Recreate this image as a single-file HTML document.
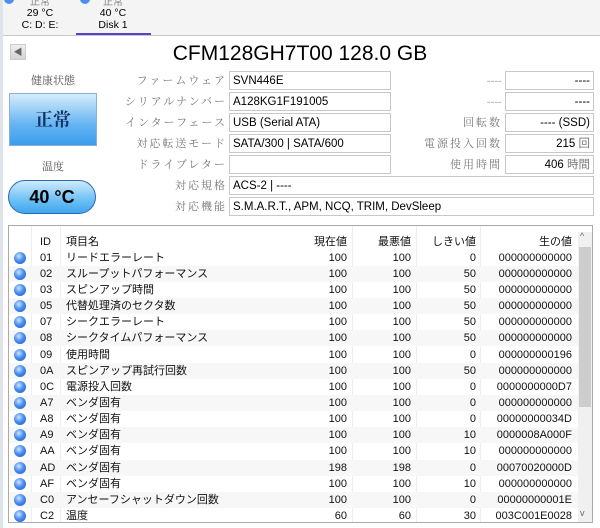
<!DOCTYPE html>
<html><head><meta charset="utf-8"><style>
body{margin:0;width:600px;height:528px;background:#fff;font-family:"Liberation Sans","Noto Sans CJK JP",sans-serif;position:relative;overflow:hidden;font-size:12px;color:#000}
.a{position:absolute}
.box{position:absolute;border:1px solid #c8c8c8;background:#fff;line-height:18px;font-size:11.5px;padding:0 3px;box-sizing:border-box;height:19px}
.lbl{position:absolute;text-align:right;color:#777;font-family:"Noto Serif CJK SC","Liberation Serif",serif;font-size:11px;letter-spacing:2px;line-height:19px}
.row{position:absolute;left:9px;width:569px;height:16px;line-height:16px;font-size:11px;color:#111}
.row span{position:absolute}
.dot{left:5px;top:2px;width:12px;height:12px;border-radius:50%;background:radial-gradient(circle at 40% 35%,#cfe6ff 0,#4a8ef0 45%,#1d55c8 100%)}
</style></head><body>
<div class="a" style="left:0;top:0;width:600px;height:35px;background:#f4f4f4"></div>
<div class="a" style="left:0;top:35px;width:600px;height:1px;background:#c8c8c8"></div>
<div class="a" style="left:0;top:0;width:3px;height:528px;background:#dfe3ea"></div>
<div class="a" style="left:4px;top:-6px;width:10px;height:10px;border-radius:50%;background:#4a8ef0"></div>
<div class="a" style="left:80px;top:-6px;width:10px;height:10px;border-radius:50%;background:#4a8ef0"></div>
<div class="a" style="left:15px;top:-3px;width:50px;text-align:center;font-size:10px;line-height:12px;color:#888">正常</div>
<div class="a" style="left:15px;top:7px;width:50px;text-align:center;font-size:10.5px;line-height:12px">29 °C<br>C: D: E:</div>
<div class="a" style="left:88px;top:-3px;width:50px;text-align:center;font-size:10px;line-height:12px;color:#888">正常</div>
<div class="a" style="left:88px;top:7px;width:50px;text-align:center;font-size:10.5px;line-height:12px">40 °C<br>Disk 1</div>
<div class="a" style="left:76px;top:33px;width:75px;height:2px;background:#5a3fd0"></div>

<div class="a" style="left:10px;top:44px;width:16px;height:16px;background:linear-gradient(#eee,#d4d4d4);border:1px solid #ccc;box-sizing:border-box;font-size:9px;color:#666;text-align:center;line-height:14px">◀</div>
<div class="a" style="left:0;top:40px;width:600px;text-align:center;font-size:21px;line-height:28px">CFM128GH7T00 128.0 GB</div>

<div class="a" style="left:9px;top:72px;width:88px;text-align:center;font-family:'Noto Serif CJK SC',serif;font-size:11px;color:#555">健康状態</div>
<div class="a" style="left:9px;top:93px;width:88px;height:53px;border:1px solid #8ab0d8;box-sizing:border-box;background:linear-gradient(#d6ecfc,#64b4f2 60%,#3b9cec);text-align:center;line-height:50px;font-family:'Noto Serif CJK SC',serif;font-size:18px;font-weight:bold;color:#113366">正常</div>
<div class="a" style="left:9px;top:158px;width:88px;text-align:center;font-family:'Noto Serif CJK SC',serif;font-size:11px;color:#555">温度</div>
<div class="a" style="left:8px;top:180px;width:88px;height:34px;border:1px solid #2a6ab0;border-radius:17px;box-sizing:border-box;background:linear-gradient(#cfeafd,#6cc0f4 60%,#3fa6ee);text-align:center;line-height:32px;font-size:18px;font-weight:bold">40 °C</div>

<div class="lbl" style="left:100px;width:127px;top:71px">ファームウェア</div><div class="box" style="left:229px;top:71px;width:162px">SVN446E</div>
<div class="lbl" style="left:100px;width:127px;top:92px">シリアルナンバー</div><div class="box" style="left:229px;top:92px;width:162px">A128KG1F191005</div>
<div class="lbl" style="left:100px;width:127px;top:113px">インターフェース</div><div class="box" style="left:229px;top:113px;width:162px">USB (Serial ATA)</div>
<div class="lbl" style="left:100px;width:127px;top:134px">対応転送モード</div><div class="box" style="left:229px;top:134px;width:162px">SATA/300 | SATA/600</div>
<div class="lbl" style="left:100px;width:127px;top:155px">ドライブレター</div><div class="box" style="left:229px;top:155px;width:162px"></div>
<div class="lbl" style="left:100px;width:127px;top:176px">対応規格</div><div class="box" style="left:229px;top:176px;width:365px">ACS-2 | ----</div>
<div class="lbl" style="left:100px;width:127px;top:197px">対応機能</div><div class="box" style="left:229px;top:197px;width:365px">S.M.A.R.T., APM, NCQ, TRIM, DevSleep</div>

<div class="lbl" style="left:400px;width:102px;top:71px;letter-spacing:0">----</div><div class="box" style="left:505px;top:71px;width:89px;text-align:right">----</div>
<div class="lbl" style="left:400px;width:102px;top:92px;letter-spacing:0">----</div><div class="box" style="left:505px;top:92px;width:89px;text-align:right">----</div>
<div class="lbl" style="left:400px;width:102px;top:113px">回転数</div><div class="box" style="left:505px;top:113px;width:89px;text-align:right">---- (SSD)</div>
<div class="lbl" style="left:400px;width:102px;top:134px">電源投入回数</div><div class="box" style="left:505px;top:134px;width:89px;text-align:right">215 <span style="color:#777">回</span></div>
<div class="lbl" style="left:400px;width:102px;top:155px">使用時間</div><div class="box" style="left:505px;top:155px;width:89px;text-align:right">406 <span style="color:#777">時間</span></div>

<div class="a" style="left:8px;top:225px;width:585px;height:298px;border:1px solid #aaa;box-sizing:border-box"></div>
<div class="a" style="left:578px;top:232px;width:14px;height:290px;background:#f0f0f0"></div>
<div class="a" style="left:579px;top:247px;width:12px;height:160px;background:#cdcdcd"></div>
<div class="a" style="left:580px;top:231px;font-size:9px;color:#666">^</div>
<div class="a" style="left:580px;top:508px;font-size:9px;color:#666">v</div>
<div class="a" style="left:31px;top:226px;width:1px;height:296px;background:#eee"></div>
<div class="a" style="left:60px;top:226px;width:1px;height:296px;background:#eee"></div>
<div class="a" style="left:352px;top:226px;width:1px;height:296px;background:#eee"></div>
<div class="a" style="left:416px;top:226px;width:1px;height:296px;background:#eee"></div>
<div class="a" style="left:480px;top:226px;width:1px;height:296px;background:#eee"></div>

<div id="t"></div>
<script>
var d=[["","ID","項目名","現在値","最悪値","しきい値","生の値"],
["d","01","リードエラーレート","100","100","0","000000000000"],
["d","02","スループットパフォーマンス","100","100","50","000000000000"],
["d","03","スピンアップ時間","100","100","50","000000000000"],
["d","05","代替処理済のセクタ数","100","100","50","000000000000"],
["d","07","シークエラーレート","100","100","50","000000000000"],
["d","08","シークタイムパフォーマンス","100","100","50","000000000000"],
["d","09","使用時間","100","100","0","000000000196"],
["d","0A","スピンアップ再試行回数","100","100","50","000000000000"],
["d","0C","電源投入回数","100","100","0","0000000000D7"],
["d","A7","ベンダ固有","100","100","0","000000000000"],
["d","A8","ベンダ固有","100","100","0","00000000034D"],
["d","A9","ベンダ固有","100","100","10","0000008A000F"],
["d","AA","ベンダ固有","100","100","10","000000000000"],
["d","AD","ベンダ固有","198","198","0","00070020000D"],
["d","AF","ベンダ固有","100","100","10","000000000000"],
["d","C0","アンセーフシャットダウン回数","100","100","0","00000000001E"],
["d","C2","温度","60","60","30","003C001E0028"]];
var h="";
d.forEach(function(r,i){var y=233.5+i*16.15;
h+='<div class="row" style="top:'+y+'px;'+(i%2==0&&i>0?'background:#f7f7f7':'')+'">'+
(r[0]?'<span class="dot"></span>':'')+
'<span style="left:31px">'+r[1]+'</span><span style="left:57px">'+r[2]+'</span>'+
'<span style="right:231px">'+r[3]+'</span><span style="right:167px">'+r[4]+'</span><span style="right:102px">'+r[5]+'</span><span style="right:6px">'+r[6]+'</span></div>';});
document.getElementById("t").innerHTML=h;
</script>
</body></html>
